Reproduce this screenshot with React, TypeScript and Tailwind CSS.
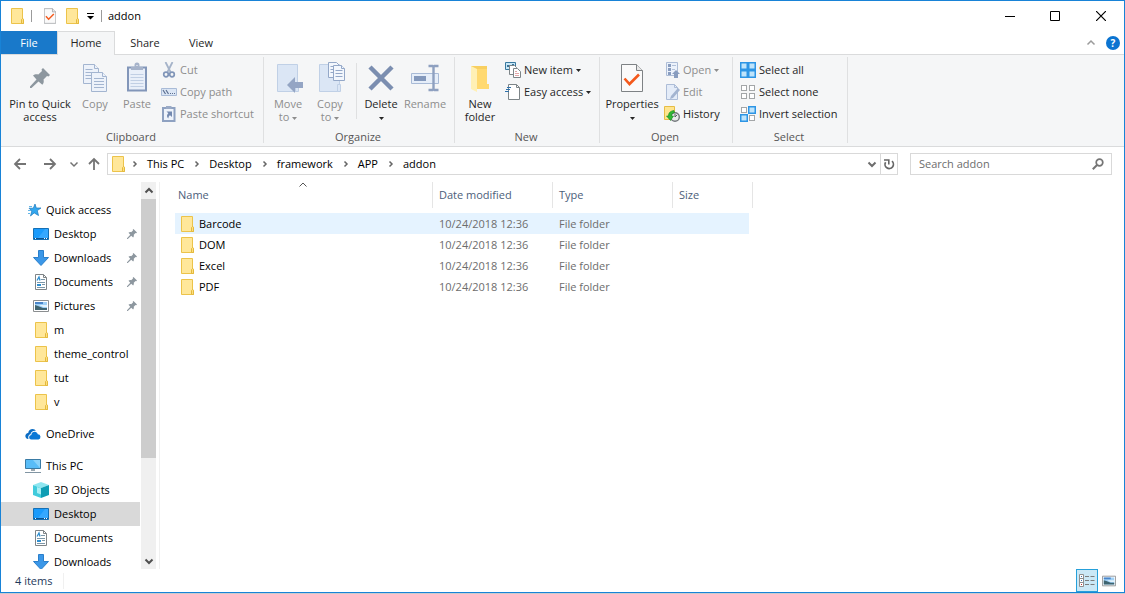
import type { ReactNode } from "react";
import clsx from "clsx";

type IconProps = { className?: string };

function FolderIcon({ className }: IconProps) {
  return (
    <svg viewBox="0 0 16 16" className={clsx("size-4 shrink-0", className)} aria-hidden="true">
      <path d="M2.500.5h11v10.500h1v4.500h-12z" fill="#ffe79a" stroke="#ecc34a" />
      <path d="M12.500 15.500v-4l1-1 1 1v4z" fill="#ffdf7c" stroke="#e3b93f" />
    </svg>
  );
}

function CheckDocIcon({ className }: IconProps) {
  return (
    <svg viewBox="0 0 22 28" className={className} aria-hidden="true">
      <path d="M.5.5h15l6 6v21h-21z" fill="#fafafa" stroke="#7e8285" />
      <path d="M15.500.5v6h6" fill="#e8e8e8" stroke="#7e8285" />
      <path d="M3.500 14.500l5 5.500 9.500-9.500" fill="none" stroke="#f4591c" strokeWidth="2.600" />
    </svg>
  );
}

function PinIcon({ className }: IconProps) {
  return (
    <svg viewBox="0 0 20 20" className={className} aria-hidden="true">
      <path d="M13 0l7 7-1.500 1.500-1.500-.5-3.500 3.500c.6 2 .2 4-1.200 5.300L8.500 13.500 1.500 20H0v-1.500L6.500 11.600 3 7.500c1.500-1.400 3.400-1.600 5.300-1.100L12 3l-.5-1.500z" fill="#8d979f" />
    </svg>
  );
}

function CopyIcon() {
  return (
    <svg viewBox="0 0 32 32" className="size-8" aria-hidden="true">
      <g fill="#edf2fa" stroke="#a3b5d0">
        <path d="M4.500 2.500h11l4 4v15h-15z" />
        <path d="M15.500 2.500v4h4" />
        <path d="M6.500 7.500h7M6.500 10.500h8M6.500 13.500h8M6.500 16.500h6" />
        <path d="M12.500 10.500h11l4 4v15h-15z" />
        <path d="M23.500 10.500v4h4" />
        <path d="M15 16.500h10M15 19.500h10M15 22.500h10M15 25.500h10" />
      </g>
    </svg>
  );
}

function PasteIcon() {
  return (
    <svg viewBox="0 0 32 32" className="size-8" aria-hidden="true">
      <path d="M7 5.500h18v23H7z" fill="#e9eff9" stroke="#8296b9" strokeWidth="2" />
      <path d="M9.500 12.500h13M9.500 15.500h13M9.500 18.500h13M9.500 21.500h13M9.500 24.500h13" stroke="#c1cfe4" />
      <path d="M10 8V5h3.500V3a2 2 0 0 1 5 0v2H22v3z" fill="#a6b3ca" />
      <path d="M15.500 3h1v1h-1z" fill="#fff" />
    </svg>
  );
}

function CutIcon() {
  return (
    <svg viewBox="0 0 16 16" className="size-4" fill="none" aria-hidden="true">
      <path d="M4.500 0l5 10M11.500 0l-5 10" stroke="#a5b3c9" strokeWidth="1.800" />
      <circle cx="5" cy="12.500" r="2.300" stroke="#8095b8" strokeWidth="1.700" />
      <circle cx="11" cy="12.500" r="2.300" stroke="#8095b8" strokeWidth="1.700" />
    </svg>
  );
}

function CopyPathIcon() {
  return (
    <svg viewBox="0 0 16 16" className="size-4" aria-hidden="true">
      <path d="M.5 4.500h15v7H.5z" fill="#dbe6f5" stroke="#a9bbd7" />
      <path d="M2 6l2.500 4M5 6l2.500 4" stroke="#5c6f91" strokeWidth="1.200" />
      <path d="M9 9h1v1H9zM11 9h1v1h-1zM13 9h1v1h-1z" fill="#5c6f91" />
    </svg>
  );
}

function PasteShortcutIcon() {
  return (
    <svg viewBox="0 0 16 16" className="size-4" aria-hidden="true">
      <path d="M2 2h11.500v13H2z" fill="#eef3fb" stroke="#8ea1c1" strokeWidth="2" />
      <path d="M5 0h5.500v3H5z" fill="#9aaac6" />
      <path d="M5.500 5.500H11V11L9 9.200C8 9.800 7.500 11 7.300 12.500 5.500 11 5.600 8.800 7.300 7.300z" fill="#7389b0" />
    </svg>
  );
}

function MoveToIcon() {
  return (
    <svg viewBox="0 0 32 32" className="size-8" aria-hidden="true">
      <path d="M5.500 2.500h20v27h-20z" fill="#dbe6f5" stroke="#c0d0e6" />
      <path d="M23.500 24.500h3v5h-3z" fill="#dbe6f5" stroke="#c0d0e6" />
      <path d="M15 23l8-8v5h8v6h-8v5z" fill="#94a5c4" />
    </svg>
  );
}

function CopyToIcon() {
  return (
    <svg viewBox="0 0 32 32" className="size-8" aria-hidden="true">
      <path d="M5.500 2.500h20v27h-20z" fill="#dbe6f5" stroke="#c0d0e6" />
      <path d="M23.500 22.500h3v7h-3z" fill="#dbe6f5" stroke="#c0d0e6" />
      <g fill="#f3f7fd" stroke="#94a8c8">
        <path d="M14.500.5h8l3 3v12h-11z" />
        <path d="M16.500 4.500h3M16.500 7.500h3M16.500 10.500h3" />
        <path d="M19.500 3.500h8l3 3v12h-11z" />
        <path d="M27.500 3.500v3h3M21.500 8.500h7M21.500 11.500h7M21.500 14.500h7" />
      </g>
    </svg>
  );
}

function DeleteIcon() {
  return (
    <svg viewBox="0 0 32 32" className="size-8" aria-hidden="true">
      <path d="M5 5l22 22M27 5L5 27" stroke="#7b8eb0" strokeWidth="4.500" />
    </svg>
  );
}

function RenameIcon() {
  return (
    <svg viewBox="0 0 32 32" className="size-8" aria-hidden="true">
      <path d="M2.500 11.500h27v10h-27z" fill="#e6eef9" stroke="#a8bad6" />
      <path d="M5 14h12v5H5z" fill="#8398bc" />
      <path d="M19.500 4h4l1 1 1-1h4M19.500 28h4l1-1 1 1h4M24.500 4.500v23" fill="none" stroke="#8ea0c0" strokeWidth="2.400" />
    </svg>
  );
}

function NewFolderIcon() {
  return (
    <svg viewBox="0 0 32 32" className="size-8" aria-hidden="true">
      <path d="M7 4h16v18h2v5H7z" fill="#f8cf60" />
      <path d="M7 4l6 3v23l-6-3z" fill="#fff0b5" />
      <path d="M13 7h10v15h2v5H13z" fill="#ffd970" />
    </svg>
  );
}

function NewItemIcon() {
  return (
    <svg viewBox="0 0 16 16" className="size-4" aria-hidden="true">
      <path d="M.5.5h10v7H.5z" fill="#c9e8f8" stroke="#39799f" />
      <path d="M2 3h3v2H2zM7 2h2v2H7z" fill="#3c7498" />
      <path d="M4.500 3.500h5l2 2v7h-7z" fill="#fff" stroke="#7d8588" />
      <path d="M8.500 6.500h4l3 3v6h-7z" fill="#fff" stroke="#7d8588" />
      <path d="M10 9.500h2M10 11.500h4M10 13.500h4" stroke="#e2a5a7" />
    </svg>
  );
}

function EasyAccessIcon() {
  return (
    <svg viewBox="0 0 16 16" className="size-4" aria-hidden="true">
      <path d="M3.500.5h8l3 3v12h-11z" fill="#fff" stroke="#7d8588" />
      <path d="M11.500.5v3h3" fill="none" stroke="#7d8588" />
      <path d="M2 3.500h4M1 5.500h4M0 7.500h4" stroke="#2f71aa" strokeWidth="1.200" />
    </svg>
  );
}

function OpenIcon() {
  return (
    <svg viewBox="0 0 16 16" className="size-4" aria-hidden="true">
      <path d="M2.500.5h11v13h-11z" fill="#ecf2fb" stroke="#adbdd7" />
      <path d="M4 2h3v3H4zM4 6h3v3H4zM4 10h3v3H4z" fill="#899dbf" />
      <path d="M8 3.500h4M8 7.500h3" stroke="#b2c1d9" />
      <path d="M12 8l4 4h-2v4h-4v-4H8z" fill="#899dbf" />
    </svg>
  );
}

function EditIcon() {
  return (
    <svg viewBox="0 0 16 16" className="size-4" aria-hidden="true">
      <path d="M2.500.5h8l3 3v12h-11z" fill="#e4ecf8" stroke="#adbdd7" />
      <path d="M10.500.5v3h3" fill="none" stroke="#adbdd7" />
      <path d="M6 15l1-3 7-8 2 2-7 8z" fill="#a3b4d0" />
    </svg>
  );
}

function HistoryIcon() {
  return (
    <svg viewBox="0 0 16 16" className="size-4" aria-hidden="true">
      <path d="M.5.5h10v13H.5z" fill="#ffe58f" stroke="#e6bd45" />
      <circle cx="11" cy="11" r="4.300" fill="#e8eaeb" stroke="#73787c" strokeWidth="1.400" />
      <path d="M11 8v3l2-2" fill="none" stroke="#55595c" />
      <path d="M10 4.500C6 5 4.500 7 4.500 10H2.500l4 4.500 3-4.500H7.500C7.500 8 8.500 7 10.500 6.500z" fill="#2fb735" stroke="#1a8b21" strokeWidth=".6" />
    </svg>
  );
}

const CELLS = [[1, 1], [9, 1], [1, 9], [9, 9]];

// filled holds the indexes of the highlighted cells
function SelectIcon({ filled }: { filled: number[] }) {
  return (
    <svg viewBox="0 0 16 16" className="size-4" aria-hidden="true">
      {CELLS.map(([x, y], i) =>
        filled.includes(i) ? (
          <rect key={i} x={x - 0.25} y={y - 0.25} width="6.500" height="6.500" fill="#bfe4fb" stroke="#2d95e5" strokeWidth="1.500" />
        ) : (
          <rect key={i} x={x + 0.5} y={y + 0.5} width="5" height="5" fill="#fff" stroke="#a3a6a8" />
        )
      )}
    </svg>
  );
}

function DesktopIcon() {
  return (
    <svg viewBox="0 0 16 16" className="size-4" aria-hidden="true">
      <path d="M.5 2.500h15v11H.5z" fill="#1a9bfc" stroke="#1570b5" />
      <path d="M12 3h3v9H5z" fill="#35a8ff" />
      <path d="M1 12h14v1H1z" fill="#0b5391" />
      <path d="M2 12h1v1H2zM11 12h1v1h-1zM13 12h1v1h-1z" fill="#fff" />
    </svg>
  );
}

function DownloadsIcon() {
  return (
    <svg viewBox="0 0 16 16" className="size-4" aria-hidden="true">
      <path d="M5.500.5h5v7h5L8 15.500.5 7.500h5z" fill="#3b97e8" stroke="#2a7fcb" />
    </svg>
  );
}

function DocumentsIcon() {
  return (
    <svg viewBox="0 0 16 16" className="size-4" aria-hidden="true">
      <path d="M2.500.5h8l3 3v12h-11z" fill="#fff" stroke="#7f8487" />
      <path d="M10.500.5v3h3" fill="none" stroke="#7f8487" />
      <path d="M4 6.500L6 3l1 3.500" fill="none" stroke="#2f8fd0" strokeWidth="1.300" />
      <path d="M8 5.500h4M4 8.500h8M9 10.500h3M4 13.500h8" stroke="#7c97a8" />
      <path d="M4 10h4v2H4z" fill="#2f8fd0" />
    </svg>
  );
}

function PicturesIcon({ className = "size-4" }: IconProps) {
  return (
    <svg viewBox="0 0 16 16" className={className} aria-hidden="true">
      <path d="M.5 2.500h15v11H.5z" fill="#fff" stroke="#8b8e90" />
      <path d="M2 4h12v8H2z" fill="#9fd0f6" />
      <path d="M2 4h8v2H2z" fill="#4a85c9" />
      <path d="M2 7l3 1 5 2h4v2H2z" fill="#3f6470" />
      <path d="M6 7h8v2h-4z" fill="#e4f3fb" />
    </svg>
  );
}

function StarIcon() {
  return (
    <svg viewBox="0 0 16 16" className="size-4" aria-hidden="true">
      <path d="M10 2l1.300 4H16l-3.700 2.600 1.200 4.900-4.300-2.600L5.500 14l1.300-5L4 6.200h4.300z" fill="#33a7ee" stroke="#1b78bd" strokeWidth=".7" />
      <path d="M4 4.500h3M3 8.500h3M3 11.500h2" stroke="#63b6e8" />
    </svg>
  );
}

function OneDriveIcon() {
  return (
    <svg viewBox="0 0 16 16" className="size-4" aria-hidden="true">
      <path d="M3.500 13A3 3 0 0 1 1 8.200c.5-.8 1.300-1.200 2.200-1.200C3.500 4.500 5.500 3 7.500 3c1.600 0 2.800.8 3.500 2-3-.6-5 1-5.500 3.200-1.700.3-2.800 2.500-2 4.800z" fill="#0a6cc4" />
      <path d="M6.500 13.500a2.300 2.300 0 0 1-.2-4.600C6.500 7 8 5.800 9.700 5.800c1.500 0 2.700.9 3.100 2.400A2.700 2.700 0 0 1 13.500 13.500z" fill="#0a78d6" />
    </svg>
  );
}

function ThisPcIcon() {
  return (
    <svg viewBox="0 0 16 16" className="size-4" aria-hidden="true">
      <path d="M.5 1.500h15v9H.5z" fill="#59bdf8" stroke="#3a7ba5" />
      <path d="M8 2h7v8z" fill="#8ad3fb" />
      <path d="M6 11h4v2H6z" fill="#9ba7af" />
      <path d="M0 14.500h16" stroke="#8195a3" />
    </svg>
  );
}

function CubeIcon() {
  return (
    <svg viewBox="0 0 16 16" className="size-4" aria-hidden="true">
      <path d="M0 3l8-3 8 3-8 3z" fill="#8fe6f0" />
      <path d="M0 3l8 3v10l-8-3z" fill="#40cbdc" />
      <path d="M16 3L8 6v10l8-3z" fill="#0d9db4" />
      <path d="M4 5l4 1.500v6L4 11z" fill="#a8eef4" />
    </svg>
  );
}

function Caret({ className }: IconProps) {
  return (
    <svg viewBox="0 0 5 3" className={clsx("inline-block h-[3px] w-[5px]", className)} aria-hidden="true">
      <path d="M0 0h5L2.500 3z" fill="currentColor" />
    </svg>
  );
}

type ChevronProps = { dir: "up" | "down" | "right"; className?: string; width?: number };

const CHEVRONS = { up: "M1.500 6.500L5 3l3.500 3.500", down: "M1.500 3.500L5 7l3.500-3.500", right: "M3.500 2.500L6 5 3.500 7.500" };

function Chevron({ dir, className, width = 1.5 }: ChevronProps) {
  return (
    <svg viewBox="0 0 10 10" className={clsx("size-2.5", className)} fill="none" aria-hidden="true">
      <path d={CHEVRONS[dir]} stroke="currentColor" strokeWidth={width} />
    </svg>
  );
}

function Arrow({ d }: { d: string }) {
  return (
    <svg viewBox="0 0 14 14" className="size-3.5" fill="none" aria-hidden="true">
      <path d={d} stroke="#747474" strokeWidth="1.800" />
    </svg>
  );
}

type BigButtonProps = { icon: ReactNode; children: ReactNode; className?: string; disabled?: boolean };

function BigButton({ icon, children, className, disabled }: BigButtonProps) {
  return (
    <button
      type="button"
      disabled={disabled}
      className={clsx("flex shrink-0 flex-col items-center pt-[3px] leading-[13px]", disabled ? "text-[#8d8d8d]" : "text-[#262626]", className)}
    >
      <span className="mb-[3px] flex size-8 items-center justify-center">{icon}</span>
      <span className="whitespace-nowrap text-center">{children}</span>
    </button>
  );
}

type SmallButtonProps = { icon: ReactNode; label: string; disabled?: boolean; menu?: boolean };

function SmallButton({ icon, label, disabled, menu }: SmallButtonProps) {
  return (
    <button
      type="button"
      disabled={disabled}
      className={clsx("flex h-[22px] items-center gap-[3px] whitespace-nowrap px-0.5", disabled ? "text-[#8d8d8d]" : "text-[#262626]")}
    >
      {icon}
      <span>{label}</span>
      {menu && <Caret />}
    </button>
  );
}

type GroupProps = { title: string; className: string; children: ReactNode };

function Group({ title, className, children }: GroupProps) {
  return (
    <section className={clsx("flex h-[86px] shrink-0 flex-col border-r border-[#dfe0e1] pt-0.5", className)}>
      <div className="flex h-[66px]">{children}</div>
      <h2 className="mt-1.5 pr-0.5 text-center leading-3 text-[#555]">{title}</h2>
    </section>
  );
}

function TitleBar() {
  return (
    <header className="flex h-[30px] items-center">
      <div className="flex flex-1 items-center pl-2">
        <FolderIcon />
        <span className="mx-1.5 h-3 w-px bg-[#9b9b9b]" />
        <button type="button" aria-label="Properties" className="ml-1 flex w-4 justify-center">
          <CheckDocIcon className="h-4 w-3" />
        </button>
        <button type="button" aria-label="New folder" className="ml-1.5">
          <FolderIcon />
        </button>
        <button type="button" aria-label="Customize Quick Access Toolbar" className="ml-1.5 p-px">
          <svg viewBox="0 0 7 7" className="size-[7px]" aria-hidden="true">
            <path d="M0 .5h7" stroke="#000" />
            <path d="M0 3h7L3.500 6.500z" fill="#000" />
          </svg>
        </button>
        <span className="mx-1.5 h-3 w-px bg-[#9b9b9b]" />
        <h1 className="text-black">addon</h1>
      </div>
      <div className="flex h-full">
        <button type="button" aria-label="Minimize" className="flex w-11 items-center justify-center">
          <svg viewBox="0 0 10 10" className="size-2.5"><path d="M0 5.500h10" stroke="#000" /></svg>
        </button>
        <button type="button" aria-label="Maximize" className="flex w-[46px] items-center justify-center">
          <svg viewBox="0 0 10 10" className="size-2.5" fill="none"><path d="M.5.5h9v9h-9z" stroke="#000" /></svg>
        </button>
        <button type="button" aria-label="Close" className="flex w-[46px] items-center justify-center">
          <svg viewBox="0 0 10 10" className="size-2.5"><path d="M0 0l10 10M10 0L0 10" stroke="#000" strokeWidth="1.200" /></svg>
        </button>
      </div>
    </header>
  );
}

function Tabs() {
  return (
    <div className="flex h-6 border-b border-[#dadbdc]">
      <button type="button" className="h-[23px] w-14 bg-[#1979ca] text-white">File</button>
      <button type="button" className="-mb-px h-6 w-[58px] border border-b-0 border-[#dadbdc] bg-[#f5f6f7] pb-0.5 text-[#262626]">Home</button>
      <button type="button" className="h-[23px] w-[60px] text-[#262626]">Share</button>
      <button type="button" className="h-[23px] w-[52px] text-[#262626]">View</button>
      <div className="ml-auto flex items-center gap-2.5 pr-1">
        <button type="button" aria-label="Minimize the Ribbon" className="text-[#9b9b9b]">
          <Chevron dir="up" />
        </button>
        <button type="button" aria-label="Help" className="flex size-3.5 items-center justify-center rounded-full bg-[#0b74d1] text-[10px] font-bold leading-none text-white">
          ?
        </button>
      </div>
    </div>
  );
}

function Ribbon() {
  return (
    <div className="flex h-[92px] overflow-hidden border-b border-[#dadbdc] bg-[#f5f6f7] pt-0.5">
      <Group title="Clipboard" className="w-[263px]">
        <BigButton className="ml-1 w-[70px]" icon={<PinIcon className="size-5" />}>Pin to Quick<br />access</BigButton>
        <BigButton className="w-10" disabled icon={<CopyIcon />}>Copy</BigButton>
        <BigButton className="w-11" disabled icon={<PasteIcon />}>Paste</BigButton>
        <div>
          <SmallButton disabled icon={<CutIcon />} label="Cut" />
          <SmallButton disabled icon={<CopyPathIcon />} label="Copy path" />
          <SmallButton disabled icon={<PasteShortcutIcon />} label="Paste shortcut" />
        </div>
      </Group>
      <Group title="Organize" className="w-[191px]">
        <BigButton className="ml-1 w-10" disabled icon={<MoveToIcon />}>Move<br />to <Caret className="align-middle" /></BigButton>
        <BigButton className="w-11" disabled icon={<CopyToIcon />}>Copy<br />to <Caret className="align-middle" /></BigButton>
        <span className="ml-1 mt-1 h-14 w-px bg-[#dfe0e1]" />
        <BigButton className="w-12" icon={<DeleteIcon />}>Delete<br /><Caret className="align-middle" /></BigButton>
        <BigButton className="w-10" disabled icon={<RenameIcon />}>Rename</BigButton>
      </Group>
      <Group title="New" className="w-[145px]">
        <BigButton className="ml-0.5 w-[46px]" icon={<NewFolderIcon />}>New<br />folder</BigButton>
        <div>
          <SmallButton icon={<NewItemIcon />} label="New item" menu />
          <SmallButton icon={<EasyAccessIcon />} label="Easy access" menu />
        </div>
      </Group>
      <Group title="Open" className="w-[133px]">
        <BigButton className="ml-0.5 w-[60px]" icon={<CheckDocIcon className="h-7 w-[22px]" />}>Properties<br /><Caret className="align-middle" /></BigButton>
        <div>
          <SmallButton disabled icon={<OpenIcon />} label="Open" menu />
          <SmallButton disabled icon={<EditIcon />} label="Edit" />
          <SmallButton icon={<HistoryIcon />} label="History" />
        </div>
      </Group>
      <Group title="Select" className="w-[115px]">
        <div className="ml-[5px]">
          <SmallButton icon={<SelectIcon filled={[0, 1, 2, 3]} />} label="Select all" />
          <SmallButton icon={<SelectIcon filled={[]} />} label="Select none" />
          <SmallButton icon={<SelectIcon filled={[1, 2]} />} label="Invert selection" />
        </div>
      </Group>
    </div>
  );
}

const crumbs = ["This PC", "Desktop", "framework", "APP", "addon"];

function NavBar() {
  return (
    <div className="flex h-[35px] items-center px-3 pb-0.5">
      <div className="flex w-[94px] shrink-0 items-center text-[#747474]">
        <button type="button" aria-label="Back"><Arrow d="M13 7H2M7 2L2 7l5 5" /></button>
        <button type="button" aria-label="Forward" className="ml-4"><Arrow d="M1 7h11M7 2l5 5-5 5" /></button>
        <button type="button" aria-label="Recent locations" className="ml-3"><Chevron dir="down" /></button>
        <button type="button" aria-label="Up" className="ml-2"><Arrow d="M7 13V2M2 7l5-5 5 5" /></button>
      </div>
      <div className="flex h-[22px] flex-1 items-center border border-[#d9d9d9]">
        <FolderIcon className="ml-0.5" />
        <nav className="-ml-1 flex flex-1 items-center">
          {crumbs.map((crumb) => (
            <span key={crumb} className="flex items-center">
              <Chevron dir="right" className="ml-2 mr-[7px] text-[#666]" />
              <a href="#" className="text-black">{crumb}</a>
            </span>
          ))}
        </nav>
        <button type="button" aria-label="Previous locations" className="px-[3px] text-[#6d6d6d]"><Chevron dir="down" width={2} /></button>
        <button type="button" aria-label="Refresh" className="flex h-full w-[17px] items-center justify-center border-l border-[#d9d9d9]">
          <svg viewBox="0 0 12 12" className="size-3" fill="none" aria-hidden="true">
            <path d="M9 3.200A4.200 4.200 0 1 1 2.600 4.200" stroke="#666" strokeWidth="1.700" />
            <path d="M1 2h4.800v4.500" stroke="#666" strokeWidth="1.600" />
          </svg>
        </button>
      </div>
      <div className="ml-3 flex h-[22px] w-[202px] items-center border border-[#d9d9d9] pl-2 pr-[7px]">
        <input type="text" aria-label="Search addon" placeholder="Search addon" className="h-5 min-w-0 flex-1 outline-none placeholder:text-[#6d6d6d]" />
        <svg viewBox="0 0 12 12" className="size-3" fill="none" aria-hidden="true">
          <circle cx="7.500" cy="4.500" r="3.300" stroke="#757575" strokeWidth="1.700" />
          <path d="M5 7L.8 11.200" stroke="#757575" strokeWidth="2" />
        </svg>
      </div>
    </div>
  );
}

type TreeItem = { label: string; icon: ReactNode; root?: boolean; pinned?: boolean; active?: boolean };

const tree: TreeItem[][] = [
  [
    { label: "Quick access", icon: <StarIcon />, root: true },
    { label: "Desktop", icon: <DesktopIcon />, pinned: true },
    { label: "Downloads", icon: <DownloadsIcon />, pinned: true },
    { label: "Documents", icon: <DocumentsIcon />, pinned: true },
    { label: "Pictures", icon: <PicturesIcon />, pinned: true },
    { label: "m", icon: <FolderIcon /> },
    { label: "theme_control", icon: <FolderIcon /> },
    { label: "tut", icon: <FolderIcon /> },
    { label: "v", icon: <FolderIcon /> },
  ],
  [{ label: "OneDrive", icon: <OneDriveIcon />, root: true }],
  [
    { label: "This PC", icon: <ThisPcIcon />, root: true },
    { label: "3D Objects", icon: <CubeIcon /> },
    { label: "Desktop", icon: <DesktopIcon />, active: true },
    { label: "Documents", icon: <DocumentsIcon /> },
    { label: "Downloads", icon: <DownloadsIcon /> },
  ],
];

function Sidebar() {
  return (
    <aside className="flex min-h-0 w-[159px] shrink-0 border-r border-[#f0f0f0] pr-[3px]">
      <nav className="mr-px flex min-w-0 flex-1 flex-col gap-2 overflow-hidden pt-4">
        {tree.map((items, i) => (
          <ul key={i}>
            {items.map((item) => (
              <li key={item.label}>
                <a
                  href="#"
                  className={clsx("flex h-6 items-center gap-[5px] pr-[3px] text-black", item.root ? "pl-6" : "pl-8", item.active && "bg-[#d9d9d9]")}
                >
                  {item.icon}
                  <span className="flex-1 whitespace-nowrap">{item.label}</span>
                  {item.pinned && <PinIcon className="size-2.5" />}
                </a>
              </li>
            ))}
          </ul>
        ))}
      </nav>
      <div className="flex w-[15px] flex-col bg-[#f0f0f0] text-[#505050]">
        <button type="button" aria-label="Scroll up" className="flex h-[17px] items-center justify-center"><Chevron dir="up" width={2} /></button>
        <div className="flex-[11] bg-[#cdcdcd]" />
        <div className="flex-[4]" />
        <button type="button" aria-label="Scroll down" className="flex h-[17px] items-center justify-center"><Chevron dir="down" width={2} /></button>
      </div>
    </aside>
  );
}

const folders = ["Barcode", "DOM", "Excel", "PDF"];

function FileList() {
  const head = "border-r border-[#e5e5e5] pl-1.5 text-left font-normal";

  return (
    <main className="min-w-0 flex-1 overflow-hidden pl-[15px]">
      <table className="w-[578px] table-fixed border-separate border-spacing-0 text-[#6d6d6d]">
        <colgroup>
          <col className="w-[258px]" />
          <col className="w-[120px]" />
          <col className="w-[120px]" />
          <col className="w-[80px]" />
        </colgroup>
        <thead className="text-[#4c607a]">
          <tr className="h-[26px]">
            <th className="relative border-r border-[#e5e5e5] pl-[3px] text-left font-normal">
              Name
              <Chevron dir="up" width={1} className="absolute -top-0.5 left-1/2 -ml-1.5 text-[#555]" />
            </th>
            <th className={head}>Date modified</th>
            <th className={head}>Type</th>
            <th className={head}>Size</th>
          </tr>
        </thead>
        <tbody>
          <tr aria-hidden="true"><td className="h-[5px]" colSpan={4} /></tr>
          {folders.map((name, i) => {
            const bg = i === 0 && "bg-[#e5f3ff]";
            return (
              <tr key={name} className="h-[21px]">
                <td className={clsx("p-0", bg)}>
                  <a href="#" className="flex items-center gap-1 pl-1 text-black"><FolderIcon />{name}</a>
                </td>
                <td className={clsx("p-0 pl-1.5", bg)}>10/24/2018 12:36</td>
                <td className={clsx("p-0 pl-1.5", bg)}>File folder</td>
                <td className="p-0"><div className={clsx("mr-1 h-[21px]", bg)} /></td>
              </tr>
            );
          })}
        </tbody>
      </table>
    </main>
  );
}

function StatusBar() {
  return (
    <footer className="flex h-[23px] items-center pl-3.5 pr-2 text-[#1e395b]">
      <span className="w-[49px] border-r border-[#f0f0f0]">4 items</span>
      <button type="button" aria-label="Details view" className="ml-auto flex h-full w-[22px] items-center justify-center border border-[#26a0da] bg-[#cbe8f6]">
        <svg viewBox="0 0 16 14" className="h-3.5 w-4" aria-hidden="true">
          <path d="M.5.5h4v12h-4zM.5 4.500h4M.5 8.500h4" fill="#fff" stroke="#8f8f8f" />
          <path d="M2 2h1v1H2zM2 6h1v1H2z" fill="#3d6fae" />
          <path d="M2 10h1v1H2z" fill="#c32f2f" />
          <path d="M6 2.500h4M11.500 2.500h4M6 6.500h4M11.500 6.500h4M6 10.500h4M11.500 10.500h4" stroke="#7d7d7d" />
        </svg>
      </button>
      <button type="button" aria-label="Large icons view" className="ml-[3px] flex w-[15px] justify-center">
        <PicturesIcon className="size-3.5" />
      </button>
    </footer>
  );
}

export default function App() {
  return (
    <div className="flex h-screen flex-col bg-[#c9cbce] pb-px font-['Open_Sans',sans-serif] text-[11px] leading-4">
      <div className="flex min-h-0 flex-1 flex-col border border-[#1883d7] bg-white">
        <TitleBar />
        <Tabs />
        <Ribbon />
        <NavBar />
        <div className="flex min-h-0 flex-1">
          <Sidebar />
          <FileList />
        </div>
        <StatusBar />
      </div>
    </div>
  );
}
